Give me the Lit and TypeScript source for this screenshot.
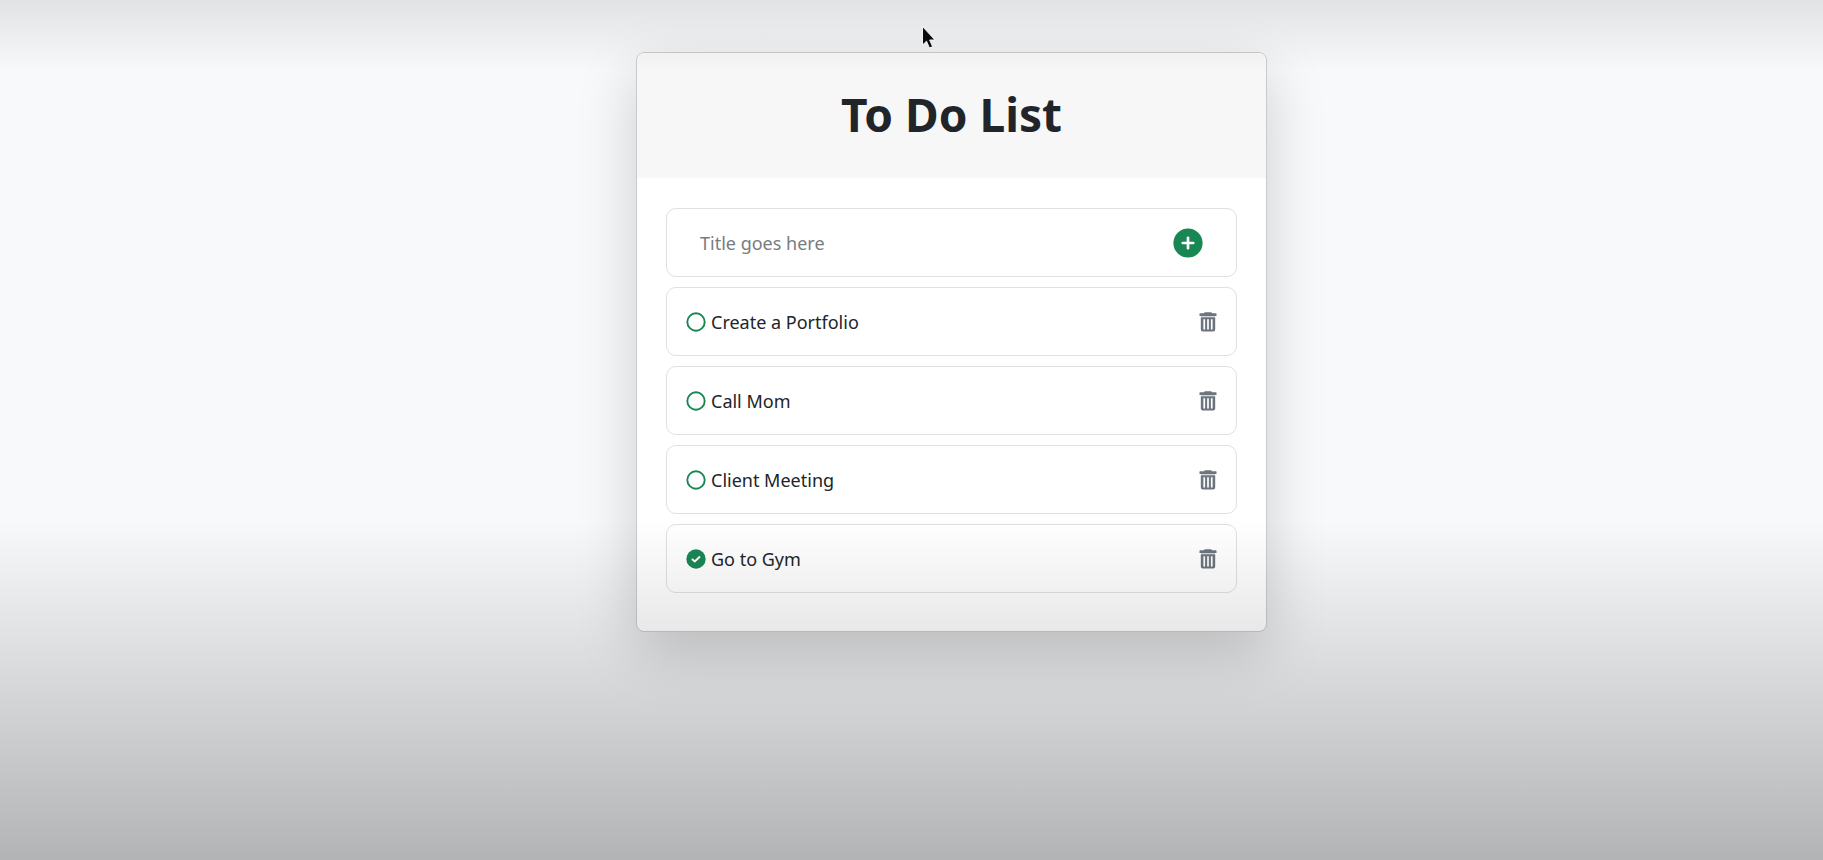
import { LitElement, html, css, svg } from "lit";
import { customElement, property, state } from "lit/decorators.js";

interface Todo {
  id: number;
  title: string;
  done: boolean;
}

@customElement("todo-item")
class TodoItem extends LitElement {
  @property({ attribute: false }) todo!: Todo;

  static styles = css`
    :host {
      display: block;
    }
    .row {
      display: flex;
      align-items: center;
      box-sizing: border-box;
      min-height: 69px;
      padding: 0 19px;
      border: 1px solid #dfe0e1;
      border-radius: 10px;
    }
    .label {
      flex: 1;
      display: flex;
      align-items: center;
      gap: 5px;
      color: #212529;
      font-size: 18px;
      line-height: 30px;
    }
    .check {
      appearance: none;
      grid-area: 1 / 1;
      margin: 0;
      width: 20px;
      height: 20px;
      cursor: pointer;
    }
    .tick {
      display: grid;
      width: 20px;
      height: 20px;
    }
    .mark {
      grid-area: 1 / 1;
      pointer-events: none;
    }
    .trash {
      display: grid;
      padding: 0;
      border: 0;
      background: none;
      color: #6c757d;
      cursor: pointer;
    }
  `;

  private emit(type: string) {
    this.dispatchEvent(new CustomEvent(type, { detail: this.todo.id, bubbles: true, composed: true }));
  }

  render() {
    const { title, done } = this.todo;
    return html`
      <div class="row">
        <label class="label">
          <span class="tick">
            <input class="check" type="checkbox" .checked=${done} @change=${() => this.emit("todo-toggle")} />
            <svg class="mark" width="20" height="20" viewBox="0 0 20 20" fill="none" aria-hidden="true">
              ${done
                ? svg`<circle cx="10" cy="10" r="9.7" fill="#198754"/><path d="M5.9 9.900 8.800 12.500 14 7.500" stroke="#fff" stroke-width="2"/>`
                : svg`<circle cx="10" cy="10" r="8.700" stroke="#198754" stroke-width="1.900"/>`}
            </svg>
          </span>
          <span>${title}</span>
        </label>
        <button class="trash" type="button" aria-label="Delete ${title}" @click=${() => this.emit("todo-delete")}>
          <svg width="18" height="20" viewBox="0 0 18 20" aria-hidden="true">
            <path fill="currentColor" d="M5.800 .3h6.400l.9 1H17a.5.5 0 0 1 .5.5v2.200H.5V1.800a.5.5 0 0 1 .5-.5h3.900z" />
            <path fill="currentColor" fill-opacity=".3" d="M2 4h14v1.200H2z" />
            <path fill="currentColor" fill-rule="evenodd" d="M1.800 5.200h14.400v12.300a2 2 0 0 1-2 2H3.800a2 2 0 0 1-2-2zM4.400 7.200v10.200h1.700V7.200zm3.750 0v10.200h1.700V7.200zm3.750 0v10.200h1.700V7.200z" />
          </svg>
        </button>
      </div>
    `;
  }
}

@customElement("app-root")
class AppRoot extends LitElement {
  @state() private todos: Todo[] = [
    { id: 1, title: "Create a Portfolio", done: false },
    { id: 2, title: "Call Mom", done: false },
    { id: 3, title: "Client Meeting", done: false },
    { id: 4, title: "Go to Gym", done: true },
  ];
  @state() private draft = "";

  static styles = css`
    :host {
      display: block;
      position: relative;
      overflow: hidden;
      box-sizing: border-box;
      min-height: 100vh;
      padding: 52px 20px 52px 100px;
      background: #f8f9fb;
      font-family: "Noto Sans", "Open Sans", sans-serif;
    }
    .shade {
      position: absolute;
      inset: 0;
      pointer-events: none;
      background:
        linear-gradient(to bottom, rgba(0, 0, 0, 0.09), rgba(0, 0, 0, 0) 72px),
        linear-gradient(to top, rgba(0, 0, 0, 0.28), rgba(0, 0, 0, 0) 340px);
    }
    .pointer {
      position: absolute;
      top: 25px;
      left: calc(50% + 8px);
    }
    .card {
      box-sizing: border-box;
      width: 100%;
      max-width: 631px;
      margin: 0 auto;
      border: 1px solid #c9cacc;
      border-radius: 8px;
      background: #fff;
      box-shadow: 0 20px 60px rgba(0, 0, 0, 0.175);
    }
    .head {
      padding: 29px 20px 32px;
      border-radius: 7px 7px 0 0;
      background: #f7f7f7;
      text-align: center;
    }
    .title {
      margin: 0;
      color: #212529;
      font-size: 46px;
      line-height: 64px;
      font-weight: 700;
    }
    .body {
      display: flex;
      flex-direction: column;
      gap: 10px;
      padding: 30px 29px 38px;
    }
    .add {
      display: flex;
      align-items: center;
      box-sizing: border-box;
      min-height: 69px;
      padding: 0 33px;
      border: 1px solid #dfe0e1;
      border-radius: 10px;
    }
    .field {
      flex: 1;
      min-width: 0;
      padding: 0;
      border: 0;
      outline: 0;
      background: none;
      color: #212529;
      font-family: inherit;
      font-size: 18px;
      line-height: 30px;
    }
    .field::placeholder {
      color: #797c7f;
    }
    .plus {
      display: grid;
      padding: 0;
      border: 0;
      background: none;
      cursor: pointer;
    }
    .list {
      display: flex;
      flex-direction: column;
      gap: 10px;
      margin: 0;
      padding: 0;
      list-style: none;
    }
  `;

  private add(e: Event) {
    e.preventDefault();
    const title = this.draft.trim();
    if (!title) return;
    this.todos = [...this.todos, { id: Date.now(), title, done: false }];
    this.draft = "";
  }

  private toggle(e: CustomEvent<number>) {
    this.todos = this.todos.map((t) => (t.id === e.detail ? { ...t, done: !t.done } : t));
  }

  private remove(e: CustomEvent<number>) {
    this.todos = this.todos.filter((t) => t.id !== e.detail);
  }

  render() {
    return html`
      <main class="card">
        <header class="head"><h1 class="title">To Do List</h1></header>
        <div class="body">
          <form class="add" @submit=${this.add}>
            <input
              class="field"
              type="text"
              aria-label="Title"
              placeholder="Title goes here"
              .value=${this.draft}
              @input=${(e: InputEvent) => (this.draft = (e.target as HTMLInputElement).value)}
            />
            <button class="plus" type="submit" aria-label="Add">
              <svg width="30" height="30" viewBox="0 0 30 30" aria-hidden="true">
                <circle cx="15" cy="15" r="14.6" fill="#198754" />
                <path d="M15 9.800v10.400M9.800 15h10.400" stroke="#fff" stroke-width="2.700" stroke-linecap="round" />
              </svg>
            </button>
          </form>
          <ul class="list" @todo-toggle=${this.toggle} @todo-delete=${this.remove}>
            ${this.todos.map((t) => html`<li><todo-item .todo=${t}></todo-item></li>`)}
          </ul>
        </div>
      </main>
      <div class="shade"></div>
      <svg class="pointer" width="18" height="26" viewBox="0 0 18 26" aria-hidden="true">
        <path d="M2.500 1.500v18.500l4-3.800 2.900 6.800 3.200-1.400-2.900-6.600h5.300z" fill="#0b0b0b" stroke="#f4f4f4" stroke-width="1" />
      </svg>
    `;
  }
}
